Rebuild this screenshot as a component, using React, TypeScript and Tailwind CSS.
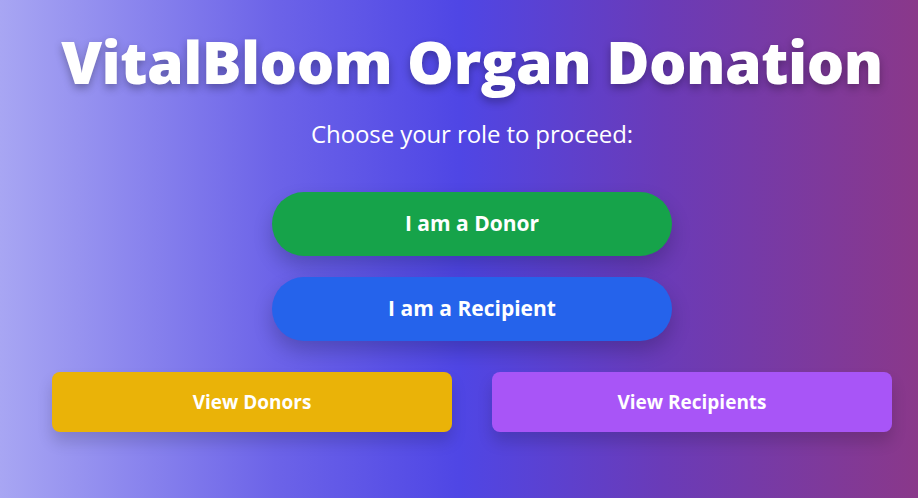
export default function App() {
  return (
    <div className="min-h-[498px] w-full bg-[linear-gradient(to_right,#a8a6f3_0%,#6c63e8_30%,#4f46e5_50%,#6a3bb8_72%,#8a388a_100%)] flex flex-col items-center pl-[26px] pt-[23px] font-['Open_Sans',sans-serif] text-white">
      <h1 className="text-[59px] leading-[76px] font-extrabold tracking-[-0.5px] whitespace-nowrap [text-shadow:0_4px_8px_rgba(0,0,0,0.3)]">
        VitalBloom Organ Donation
      </h1>
      <p className="mt-[20px] text-[24px] leading-[30px] tracking-[-0.1px]">Choose your role to proceed:</p>
      <div className="mt-[43px] flex flex-col gap-[21px]">
        <button className="w-[400px] h-[64px] rounded-full bg-[#16a34a] text-[21px] font-bold shadow-[0_10px_20px_rgba(0,0,0,0.2)]">
          I am a Donor
        </button>
        <button className="w-[400px] h-[64px] rounded-full bg-[#2563eb] text-[21px] font-bold shadow-[0_10px_20px_rgba(0,0,0,0.2)]">
          I am a Recipient
        </button>
      </div>
      <div className="mt-[31px] flex gap-[40px]">
        <button className="w-[400px] h-[60px] rounded-lg bg-[#eab308] text-[19px] font-bold shadow-[0_10px_15px_rgba(0,0,0,0.15)]">
          View Donors
        </button>
        <button className="w-[400px] h-[60px] rounded-lg bg-[#a855f7] text-[19px] font-bold shadow-[0_10px_15px_rgba(0,0,0,0.15)]">
          View Recipients
        </button>
      </div>
    </div>
  );
}
